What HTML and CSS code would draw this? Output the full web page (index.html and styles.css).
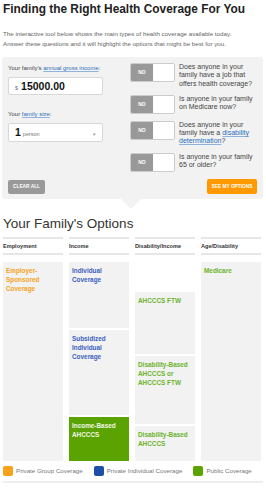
FILE: index.html
```html
<!DOCTYPE html>
<html lang="en">
<head>
    <meta charset="UTF-8">
    <meta name="viewport" content="width=device-width, initial-scale=1.0">
    <title>Health Coverage Finder</title>
    <link rel="stylesheet" href="styles.css">
</head>
<body>
    <h1 class="title">Finding the Right Health Coverage For You</h1>
    <p class="intro">The interactive tool below shows the main types of health coverage available today. Answer these questions and it will highlight the options that might be best for you.</p>

    <div class="panel">
        <div class="panel-body">
            <div class="fields">
                <label class="field-label">Your family's <a href="#">annual gross income</a>:</label>
                <div class="box income">
                    <span class="unit">$</span>
                    <span class="value">15000.00</span>
                </div>
                <label class="field-label">Your <a href="#">family size</a>:</label>
                <div class="box size">
                    <span class="value">1</span>
                    <span class="unit">person</span>
                    <span class="caret">&#9662;</span>
                </div>
            </div>
            <div class="questions">
                <div class="question">
                    <div class="toggle"><span class="toggle-no">NO</span><span class="toggle-yes"></span></div>
                    <p>Does anyone in your<br>family have a job that<br>offers health coverage?</p>
                </div>
                <div class="question">
                    <div class="toggle"><span class="toggle-no">NO</span><span class="toggle-yes"></span></div>
                    <p>Is anyone in your family<br>on Medicare now?</p>
                </div>
                <div class="question">
                    <div class="toggle"><span class="toggle-no">NO</span><span class="toggle-yes"></span></div>
                    <p>Does anyone in your<br>family have a <a href="#">disability<br>determination</a>?</p>
                </div>
                <div class="question">
                    <div class="toggle"><span class="toggle-no">NO</span><span class="toggle-yes"></span></div>
                    <p>Is anyone in your family<br>65 or older?</p>
                </div>
            </div>
        </div>
        <div class="actions">
            <button class="btn btn-clear">CLEAR ALL</button>
            <button class="btn btn-see">SEE MY OPTIONS</button>
        </div>
    </div>

    <h2 class="options-title">Your Family's Options</h2>

    <div class="options">
        <div class="column">
            <div class="column-head">Employment</div>
            <div class="cell group full">Employer-Sponsored Coverage</div>
        </div>
        <div class="column">
            <div class="column-head">Income</div>
            <div class="cell individual h-individual">Individual Coverage</div>
            <div class="cell individual h-subsidized">Subsidized Individual Coverage</div>
            <div class="cell public active h-income">Income-Based AHCCCS</div>
        </div>
        <div class="column">
            <div class="column-head">Disability/Income</div>
            <div class="spacer"></div>
            <div class="cell public h-ftw">AHCCCS FTW</div>
            <div class="cell public h-dis-ftw">Disability-Based AHCCCS or AHCCCS FTW</div>
            <div class="cell public h-dis">Disability-Based AHCCCS</div>
        </div>
        <div class="column">
            <div class="column-head">Age/Disability</div>
            <div class="cell public full">Medicare</div>
        </div>
    </div>

    <div class="legend">
        <span class="legend-item"><span class="swatch swatch-group"></span>Private Group Coverage</span>
        <span class="legend-item"><span class="swatch swatch-individual"></span>Private Individual Coverage</span>
        <span class="legend-item"><span class="swatch swatch-public"></span>Public Coverage</span>
    </div>
</body>
</html>
```
FILE: styles.css
```css
body {
    font-family: 'Liberation Sans', Arial, sans-serif;
    margin: 0;
    padding: 0 3px 0 2px;
    background: #fff;
    color: #333;
    width: 261px;
}
a {
    color: #2a6ebb;
    text-decoration: underline;
    text-decoration-color: #8fb3dd;
}
.title {
    font-size: 11.9px;
    font-weight: 700;
    margin: 2px 0 0 1px;
    line-height: 15px;
    color: #222;
    white-space: nowrap;
}
.intro {
    font-size: 6.2px;
    line-height: 10px;
    color: #666;
    margin: 12px 0 0 1px;
    max-width: 243px;
}
.panel {
    position: relative;
    margin-top: 8px;
    background: #f2f2f2;
    border-radius: 3px;
    padding: 6px 6px 5px 6px;
}
.panel::after {
    content: '';
    position: absolute;
    left: 119px;
    bottom: -10px;
    border-left: 10px solid transparent;
    border-right: 10px solid transparent;
    border-top: 10px solid #f2f2f2;
}
.panel-body {
    display: flex;
    justify-content: space-between;
}
.fields {
    width: 95px;
    display: flex;
    flex-direction: column;
}
.field-label {
    font-size: 6px;
    color: #444;
    line-height: 8px;
    margin-top: 1px;
    white-space: nowrap;
}
.box {
    display: flex;
    align-items: baseline;
    background: #fff;
    border: 1px solid #d8d8d8;
    border-radius: 2px;
    height: 18px;
    box-sizing: border-box;
    padding: 0 6px;
    margin-top: 5px;
    margin-bottom: 14px;
    line-height: 16px;
}
.box .value {
    font-size: 10.5px;
    font-weight: 700;
    color: #111;
}
.box .unit {
    font-size: 5.5px;
    color: #777;
    margin: 0 3px 0 0;
}
.size {
    height: 19px;
    line-height: 17px;
    margin-bottom: 0;
}
.size .value {
    margin-right: 2px;
}
.size .caret {
    margin-left: auto;
    font-size: 5px;
    color: #999;
}
.questions {
    width: 127px;
    display: flex;
    flex-direction: column;
    gap: 7px;
}
.question {
    display: flex;
    align-items: flex-start;
}
.toggle {
    display: flex;
    width: 45px;
    height: 19px;
    flex-shrink: 0;
    border: 1px solid #ccc;
    border-radius: 2px;
    box-sizing: border-box;
    overflow: hidden;
}
.toggle-no {
    width: 22px;
    background: #999;
    color: #fff;
    font-size: 5px;
    font-weight: 700;
    line-height: 17px;
    text-align: center;
}
.toggle-yes {
    flex: 1;
    background: #fff;
}
.question p {
    flex: 1;
    margin: 0 0 0 4px;
    font-size: 7px;
    line-height: 8.3px;
    color: #444;
    white-space: nowrap;
}
.actions {
    display: flex;
    justify-content: space-between;
    align-items: center;
    margin-top: 7px;
}
.btn {
    border: none;
    border-radius: 2px;
    color: #fff;
    font-family: 'Liberation Sans', Arial, sans-serif;
    font-size: 4.8px;
    font-weight: 700;
    padding: 0 3px;
    height: 14px;
    white-space: nowrap;
}
.btn-clear {
    background: #999;
    width: 37px;
    margin-top: 1px;
}
.btn-see {
    background: #ff9900;
    width: 50px;
    height: 15px;
}
.options-title {
    font-size: 13.5px;
    font-weight: 400;
    color: #333;
    margin: 16px 0 0 1px;
    line-height: 18px;
}
.options {
    display: grid;
    grid-template-columns: repeat(4, 60px);
    column-gap: 6px;
    margin: 4px 0 0 1px;
}
.column {
    display: flex;
    flex-direction: column;
    gap: 2px;
}
.column-head {
    border-top: 2px solid #e6e6e6;
    border-bottom: 2px solid #e6e6e6;
    font-size: 5.6px;
    font-weight: 700;
    color: #333;
    line-height: 14px;
    height: 14px;
    margin-bottom: 5px;
}
.cell {
    background: #f2f2f2;
    font-size: 6.4px;
    font-weight: 700;
    line-height: 9px;
    padding: 4px 3px;
    box-sizing: border-box;
}
.full {
    height: 199px;
}
.group {
    color: #f5a31c;
}
.individual {
    color: #3c5fbd;
}
.public {
    color: #6cb22a;
}
.active {
    background: #5aa300;
    color: #f2f7e8;
}
.h-individual {
    height: 66px;
}
.h-subsidized {
    height: 85px;
}
.h-income {
    height: 44px;
}
.spacer {
    height: 28px;
}
.h-ftw {
    height: 62px;
}
.h-dis-ftw {
    height: 68px;
}
.h-dis {
    height: 35px;
}
.legend {
    display: flex;
    gap: 11px;
    margin: 5px 0 0 1px;
    padding-bottom: 5px;
    border-bottom: 2px solid #eee;
}
.legend-item {
    display: flex;
    align-items: center;
    font-size: 6.2px;
    color: #777;
}
.swatch {
    width: 10px;
    height: 10px;
    border-radius: 2px;
    margin-right: 3px;
}
.swatch-group {
    background: #f7a21b;
}
.swatch-individual {
    background: #1d4faa;
}
.swatch-public {
    background: #5aa300;
}
```
